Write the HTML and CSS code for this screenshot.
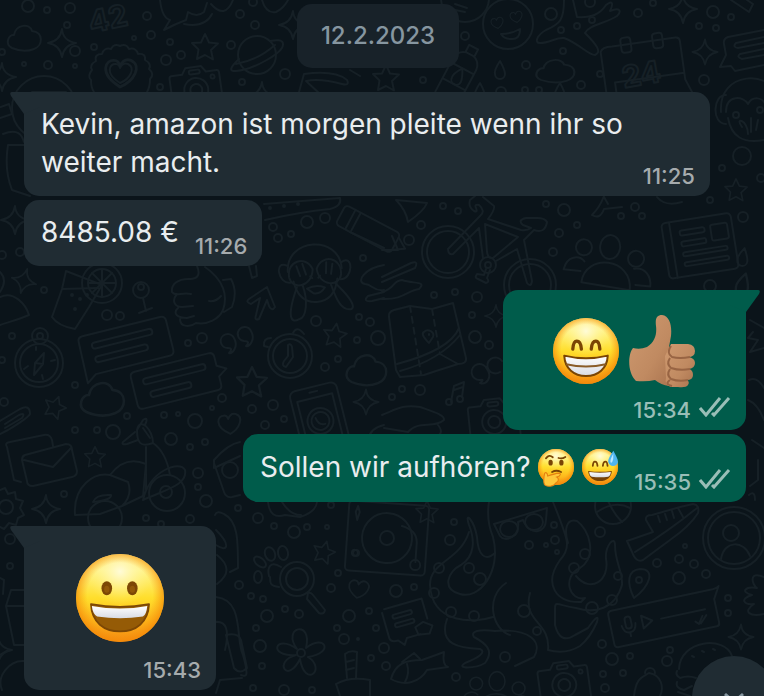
FILE: index.html
```html
<!DOCTYPE html>
<html lang="de">
<head>
  <meta charset="UTF-8">
  <meta name="viewport" content="width=device-width, initial-scale=1.0">
  <title>Chat</title>
  <link rel="stylesheet" href="styles.css">
</head>
<body>
  <!-- doodle wallpaper -->
  <svg class="wallpaper" width="764" height="696" viewBox="0 0 764 696" aria-hidden="true">
    <defs>
      <path id="star" d="M0-13 4-4.5 13-3.5 6 3 8 12.500 0 8-8 12 -6.500 2.500-13-4-4-4.500Z"/>
      <path id="sparkle" d="M0-14Q1-2 14 0 2 2 0 14-2 2-14 0-2-2 0-14Z"/>
      <path id="cloud" d="M-12 10C-20 6-15-4-10-3-8-14 6-15 8-7 20-6 19 8 10 11Q0 15-12 10Z"/>
      <path id="heart" d="M0 10C-16 0-10-10-4-9Q-1-9 0-5 3-11 8-9C16-5 10 6 0 10Z"/>
      <path id="drop" d="M0-9Q-6 0-5 4A5 5 0 0 0 5 4Q5 0 0-9Z"/>
      <g id="note-card"><path d="M-40-20H40Q45-20 45-15V15Q45 20 40 20H-36L-46 27-45-15Q-45-20-40-20Z"/><rect x="-33" y="-11" width="62" height="6" rx="3"/><rect x="-33" y="3" width="54" height="6" rx="3"/></g>
      <g id="camera"><path d="M-23-15H-12L-8-21H8L12-15H23Q25-15 25-12V18Q25 21 22 21H-22Q-25 21-25 18V-12Q-25-15-23-15Z"/><circle cy="2" r="12"/><circle cy="2" r="6"/><rect x="-5" y="-18" width="11" height="4" rx="2"/><circle cx="18" cy="-9" r="2"/></g>
      <g id="people"><circle cx="-26" cy="-8" r="8"/><ellipse cy="-11" rx="10" ry="12"/><circle cx="27" cy="-2" r="8"/><path d="M-25 27C-24-3 24-3 24 30ZM-27 16H-44C-42 2-30 0-24 6M26 8C37 5 44 14 44 24H29"/></g>
      <g id="monkey"><path d="M-27-4C-27-38 27-38 27-4M-27-10C-40-18-38 8-25 7M27-10C40-18 38 8 25 7M-22 6Q-18 28 0 28 18 28 22 6"/><path d="M-9 14Q0 10 9 14 4 21-3 19ZM-5 2-3 4M5 2 3 4"/><path d="M-2-5C-8-20-28-15-26 2-24 14-4 14-2-5ZM2-5C8-20 28-15 26 2 24 14 4 14 2-5ZM-19 12C-32 42-27 48-19 44-11 43-9 25-13 11M20 11C40 33 38 40 29 37 21 34 18 20 15 11M-18-9-15 1M-12-11-9 0M12-11 11 0M18-9 16 1"/></g>
    </defs>

    <!-- bubbles and dots -->
    <circle cx="28" cy="6" r="6"/><circle cx="47" cy="10" r="3"/><circle cx="70" cy="8" r="5"/><circle cx="67" cy="25" r="3"/><circle cx="147" cy="16" r="4"/><circle cx="151" cy="35" r="4"/><circle cx="134" cy="38" r="2"/><circle cx="170" cy="42" r="3"/><circle cx="94" cy="47" r="3"/><circle cx="75" cy="51" r="5"/><circle cx="48" cy="65" r="4"/><circle cx="24" cy="64" r="2"/><circle cx="75" cy="66" r="2"/><circle cx="166" cy="60" r="5"/><circle cx="181" cy="55" r="4"/><circle cx="231" cy="45" r="4"/><circle cx="240" cy="14" r="4"/><circle cx="253" cy="2" r="4"/><circle cx="255" cy="25" r="4"/><circle cx="242" cy="82" r="3"/><circle cx="285" cy="74" r="5"/><circle cx="160" cy="87" r="3"/><circle cx="2" cy="52" r="3"/>
    <circle cx="551" cy="14" r="6"/><circle cx="590" cy="2" r="5"/><circle cx="638" cy="13" r="4"/><circle cx="465" cy="36" r="4"/><circle cx="563" cy="51" r="3"/><circle cx="526" cy="65" r="4"/><circle cx="423" cy="80" r="3"/><circle cx="600" cy="74" r="3"/><circle cx="581" cy="85" r="4"/><circle cx="699" cy="26" r="3"/><circle cx="716" cy="28" r="3"/><circle cx="713" cy="12" r="6"/><circle cx="731" cy="17" r="3"/><circle cx="704" cy="80" r="5"/><circle cx="577" cy="26" r="3"/><circle cx="592" cy="20" r="3"/><circle cx="561" cy="30" r="3"/><circle cx="653" cy="3" r="3"/><circle cx="525" cy="90" r="3"/><circle cx="539" cy="90" r="3"/><circle cx="501" cy="92" r="5"/>
    <circle cx="722" cy="168" r="3"/><circle cx="710" cy="200" r="3"/><circle cx="743" cy="217" r="5"/><circle cx="761" cy="178" r="4"/><circle cx="443" cy="206" r="3"/><circle cx="458" cy="211" r="3"/><circle cx="421" cy="225" r="4"/><circle cx="564" cy="210" r="6"/><circle cx="546" cy="204" r="3"/><circle cx="621" cy="216" r="3"/><circle cx="635" cy="207" r="4"/><circle cx="642" cy="216" r="3"/><circle cx="577" cy="225" r="3"/><circle cx="559" cy="233" r="4"/><circle cx="307" cy="222" r="6"/><circle cx="325" cy="218" r="5"/><circle cx="273" cy="227" r="4"/><circle cx="278" cy="238" r="4"/><circle cx="291" cy="234" r="3"/>
    <circle cx="44" cy="290" r="3"/><circle cx="20" cy="252" r="4"/><circle cx="2" cy="255" r="4"/><circle cx="107" cy="315" r="5"/><circle cx="120" cy="316" r="4"/><circle cx="188" cy="343" r="3"/><circle cx="202" cy="338" r="5"/><circle cx="12" cy="336" r="3"/><circle cx="2" cy="360" r="3"/><circle cx="75" cy="385" r="3"/><circle cx="4" cy="402" r="4"/><circle cx="75" cy="430" r="3"/><circle cx="97" cy="430" r="3"/><circle cx="113" cy="432" r="7"/><circle cx="127" cy="416" r="3"/><circle cx="164" cy="415" r="3"/><circle cx="178" cy="414" r="2"/><circle cx="195" cy="421" r="7"/><circle cx="171" cy="439" r="6"/><circle cx="190" cy="447" r="3"/><circle cx="205" cy="442" r="3"/><circle cx="222" cy="398" r="4"/><circle cx="212" cy="408" r="2"/><circle cx="252" cy="409" r="4"/><circle cx="273" cy="405" r="5"/><circle cx="284" cy="419" r="3"/><circle cx="265" cy="425" r="4"/><circle cx="325" cy="367" r="4"/><circle cx="338" cy="359" r="3"/><circle cx="316" cy="321" r="5"/><circle cx="359" cy="317" r="3"/><circle cx="370" cy="322" r="4"/><circle cx="357" cy="340" r="3"/><circle cx="378" cy="338" r="7"/><circle cx="363" cy="258" r="3"/>
    <circle cx="409" cy="240" r="5"/><circle cx="434" cy="295" r="3"/><circle cx="455" cy="292" r="3"/><circle cx="477" cy="297" r="5"/><circle cx="472" cy="315" r="3"/><circle cx="475" cy="337" r="6"/><circle cx="489" cy="345" r="4"/><circle cx="402" cy="389" r="3"/><circle cx="420" cy="390" r="5"/><circle cx="392" cy="397" r="3"/><circle cx="553" cy="252" r="4"/><circle cx="710" cy="286" r="6"/>
    <circle cx="64" cy="494" r="3"/><circle cx="198" cy="473" r="5"/><circle cx="198" cy="487" r="3"/><circle cx="206" cy="501" r="6"/><circle cx="146" cy="518" r="3"/><circle cx="190" cy="519" r="4"/><circle cx="161" cy="524" r="3"/><circle cx="238" cy="508" r="3"/><circle cx="258" cy="518" r="5"/><circle cx="274" cy="526" r="3"/><circle cx="294" cy="532" r="6"/><circle cx="307" cy="527" r="3"/><circle cx="327" cy="527" r="2"/><circle cx="331" cy="505" r="3"/><circle cx="239" cy="585" r="4"/><circle cx="251" cy="596" r="3"/><circle cx="263" cy="599" r="3"/><circle cx="285" cy="609" r="3"/><circle cx="299" cy="614" r="4"/><circle cx="267" cy="616" r="6"/><circle cx="256" cy="628" r="3"/><circle cx="260" cy="646" r="6"/><circle cx="262" cy="666" r="3"/><circle cx="338" cy="573" r="3"/><circle cx="331" cy="588" r="4"/><circle cx="349" cy="616" r="6"/><circle cx="369" cy="611" r="3"/><circle cx="337" cy="628" r="3"/><circle cx="344" cy="639" r="5"/><circle cx="358" cy="639" r="1"/><circle cx="376" cy="628" r="3"/><circle cx="371" cy="658" r="3"/><circle cx="253" cy="688" r="3"/><circle cx="284" cy="690" r="5"/><circle cx="10" cy="539" r="5"/><circle cx="10" cy="566" r="3"/><circle cx="356" cy="553" r="3"/><circle cx="312" cy="690" r="3"/>
    <circle cx="454" cy="522" r="3"/><circle cx="450" cy="540" r="5"/><circle cx="600" cy="532" r="5"/><circle cx="529" cy="545" r="4"/><circle cx="546" cy="545" r="2"/><circle cx="555" cy="540" r="4"/><circle cx="554" cy="525" r="3"/><circle cx="557" cy="552" r="2"/><circle cx="657" cy="563" r="4"/><circle cx="679" cy="559" r="4"/><circle cx="694" cy="564" r="4"/><circle cx="685" cy="546" r="2"/><circle cx="706" cy="574" r="4"/><circle cx="679" cy="578" r="6"/><circle cx="396" cy="591" r="6"/><circle cx="414" cy="587" r="3"/><circle cx="728" cy="598" r="3"/><circle cx="728" cy="613" r="3"/><circle cx="384" cy="648" r="5"/><circle cx="505" cy="657" r="5"/><circle cx="386" cy="666" r="4"/><circle cx="456" cy="677" r="4"/><circle cx="602" cy="644" r="4"/><circle cx="612" cy="659" r="6"/><circle cx="630" cy="656" r="3"/><circle cx="670" cy="650" r="3"/><circle cx="667" cy="661" r="5"/><circle cx="603" cy="674" r="3"/><circle cx="623" cy="673" r="3"/><circle cx="605" cy="688" r="4"/>

    <!-- stars, sparkles, clouds, hearts, drops -->
    <use href="#star" x="205" y="47"/>
    <use href="#star" x="386" y="78"/>
    <use href="#star" transform="translate(736 190) scale(.85)"/>
    <use href="#star" transform="translate(335 335) rotate(8) scale(.9)"/>
    <use href="#star" transform="translate(252 382) scale(1.15)"/>
    <use href="#star" transform="translate(55 407) rotate(20) scale(.85)"/>
    <use href="#star" transform="translate(95 457) scale(.8)"/>
    <use href="#star" transform="translate(324 552) rotate(15) scale(.85)"/>
    <use href="#star" transform="translate(427 512) scale(.85)"/>
    <use href="#sparkle" x="62" y="43"/>
    <use href="#sparkle" x="2" y="77"/>
    <use href="#sparkle" x="262" y="96"/>
    <use href="#sparkle" x="293" y="25"/>
    <use href="#sparkle" x="15" y="220"/>
    <use href="#sparkle" x="683" y="9"/>
    <use href="#sparkle" transform="translate(705 52) scale(.9)"/>
    <use href="#sparkle" transform="translate(24 281) rotate(15) scale(.9)"/>
    <use href="#sparkle" transform="translate(366 402) scale(.9)"/>
    <use href="#sparkle" transform="translate(496 316) scale(.8)"/>
    <use href="#sparkle" x="46" y="509"/>
    <use href="#sparkle" transform="translate(741 637) scale(.9)"/>
    <use href="#sparkle" x="-2" y="650"/>
    <use href="#cloud" x="24" y="38"/>
    <use href="#cloud" transform="translate(555 71) scale(1.15 .9)"/>
    <use href="#cloud" transform="translate(102 399) scale(1.300)"/>
    <use href="#cloud" transform="translate(366 370) scale(1.200)"/>
    <use href="#heart" x="120" y="73"/>
    <use href="#heart" transform="translate(120 73) scale(1.400)"/>
    <use href="#heart" transform="translate(229 424) rotate(-8)"/>
    <use href="#heart" transform="translate(358 589) rotate(8) scale(.9)"/>
    <use href="#drop" x="500" y="70"/>
    <use href="#drop" x="480" y="92"/>
    <use href="#drop" x="560" y="92"/>
    <use href="#drop" transform="translate(743 257) rotate(10)"/>
    <use href="#drop" transform="translate(743 284) rotate(15) scale(1.200)"/>

    <!-- top row -->
    <text class="numeral" transform="translate(91 33) rotate(-12)">42</text>
    <path d="M160 0Q162 18 170 20L164 30Q175 24 186 20L188 12Q197 18 204 12L207 3M184 24Q205 28 212 14M211 4Q225 20 233 0M262 0Q266 14 276 12 284 8 288 0"/>
    <path d="M120 46q6-3 9 3 7-2 9 5 8-1 7 6 7 4 4 9 6 5 1 10 0 8-3 13M120 46q-6-3-9 3-7-2-9 5-8 0-6 7-7 4-4 9-5 6-1 10 0 8 3 12"/>
    <circle cx="257" cy="55" r="19"/><path d="M239 59Q225 72 236 71C252 70 284 53 283 44 283 39 275 40 270 41M236 64Q258 60 275 45"/>
    <use href="#camera" transform="translate(196 88) rotate(-8)"/>
    <circle cx="44" cy="108" r="32"/><path d="M32 92H66M-2 108 9 104 12 114 0 118M3 134C18 128 22 135 24 142M8 145H24M8 145Q4 170 12 190L30 196"/>
    <path d="M299 92 304 74Q335 70 347 80 350 86 342 84 320 78 306 81L320 94M350 70 360 76"/>
    <circle cx="465" cy="-2" r="24"/><path d="M455 4 467 8M455 10 465 12"/>
    <circle cx="508" cy="24" r="25"/><use href="#heart" transform="translate(497 23) rotate(-12) scale(.55)"/><use href="#heart" transform="translate(516 17) rotate(-12) scale(.55)"/><path d="M501 34Q511 34 520 29 520 40 511 39 504 39 501 34Z"/>
    <path d="M564 0C564 20 560 24 546 30 537 35 534 43 540 43 550 43 556 37 564 38 580 44 588 55 595 55 602 52 597 45 585 33 589 25 604 24 617 16 622 11 620 7 610 11 614 3 612 0 606 5 600 14 592 18 577 17L573 0"/>
    <g transform="translate(461 71) rotate(28)"><path d="M-13 30V-8Q-12-17-4-19H4Q12-17 13-8V30M-13-3H13M-13 15H13M-5-20V-27H5V-20"/><use href="#drop" x="0" y="6"/></g>
    <g transform="translate(646 73) rotate(-8)"><path d="M-42 22V-27Q-40-32-30-31H34Q38-31 38-27V12L44 28M-32 5H38M-32 5V22"/><rect x="-21" y="-38" width="10" height="15" rx="3"/><rect x="11" y="-38" width="10" height="15" rx="3"/></g>
    <text class="numeral" transform="translate(624 88) rotate(-10)">24</text>
    <path d="M764 30 728 37Q723 39 724 44L726 55 720 67 731 66 735 71 764 65M764 37 736 43Q732 47 738 48L764 43M764 49 740 54Q736 57 742 59L764 55M731 0 749 12 753 4 747 0"/>
    <g transform="translate(748 112)"><path d="M-27 0C-30-42 24-42 30-15M-22-17C-35-18-37 12-22 12M-22 0C-22-18-4-16 0-8 4-16 16-16 18-5M-20 6Q-15 34 16 28M0 22C0 8-14 4-6 15M3 20 3 6M8 18 10 8"/><circle cx="-12" cy="3" r="3"/><circle cx="12" cy="-2" r="3"/><circle cx="-6" cy="44" r="9"/></g>

    <!-- strip between the first messages -->
    <path d="M264 204 340 198Q342 206 330 209 300 212 265 220"/><circle cx="270" cy="208" r="1"/><circle cx="284" cy="206" r="1"/><circle cx="298" cy="204" r="1"/>
    <g transform="translate(368 229) rotate(28)"><rect x="-31" y="-11" width="62" height="22" rx="4"/><path d="M-20-11V11M-14-11V11M31-7 42 0 31 7"/></g>
    <path d="M396 200 427 203Q424 211 408 222 406 210 396 200Z"/>
    <path d="M592 215Q600 207 604 196M592 215Q600 220 604 209L622 207M657 197Q665 207 682 202M604 197 608 204"/>
    <g transform="translate(699 246) rotate(-9)"><rect x="-34" y="-28" width="70" height="56" rx="4"/><path d="M-26-28V28"/><rect x="-17" y="-18" width="25" height="5" rx="2"/><rect x="-17" y="-7" width="25" height="5" rx="2"/><rect x="-17" y="4" width="45" height="4" rx="2"/><rect x="-17" y="14" width="45" height="4" rx="2"/><rect x="14" y="-19" width="17" height="16" rx="2"/></g>

    <!-- middle rows -->
    <path d="M0 272Q8 280 0 292M0 297C14 290 26 305 29 315 18 320 8 322 0 325M350 232 384 248M384 265C365 268 355 282 365 284 372 284 374 292 384 290M384 292 368 296Q362 302 372 301L384 298"/>
    <path d="M66 271 62 289 52 317Q58 326 75 329L89 307 102 285ZM62 289 98 288"/><circle cx="72" cy="295" r="1"/><circle cx="80" cy="299" r="1"/><circle cx="87" cy="295" r="1"/><circle cx="75" cy="309" r="1"/>
    <circle cx="102" cy="283" r="20"/><circle cx="102" cy="283" r="14"/><path d="M88 283H116M102 269V297M92 273 112 293M112 273 92 293"/>
    <circle cx="141" cy="290" r="8"/><circle cx="141" cy="287" r="3"/><path d="M143 298 146 311M139 313 152 308"/>
    <path d="M197 266Q202 278 191 279C177 278 171 285 172 292 175 297 182 292 191 294M177 294C171 301 175 307 182 307L193 306M178 308C172 314 178 318 187 318L194 316M180 319C180 328 191 327 196 323 208 325 219 319 223 310 228 296 224 280 205 267M209 301Q216 302 221 296M223 280 231 279Q238 292 232 307L224 312M249 266 252 278 257 276 256 266"/>
    <path d="M267 287 275 307Q272 312 269 306L267 300 259 319Q254 321 256 315L260 298 251 304Q245 302 249 299Z"/>
    <use href="#monkey" transform="translate(315 274) rotate(-4)"/>
    <circle cx="39" cy="363" r="24"/><circle cx="39" cy="363" r="19"/><circle cx="40" cy="336" r="8"/><circle cx="40" cy="336" r="3"/><path d="M44 353 35 363 34 375 43 364ZM35 363 43 364M24 369 28 366M51 361 55 360M43 379 42 375M36 347 36 350"/>
    <use href="#note-card" transform="translate(126 346) rotate(-14)"/>
    <g transform="translate(176 381) rotate(-14) scale(-1 1)"><path d="M-38-19H38Q43-19 43-14V14Q43 19 38 19H-38Q-43 19-43 14V6L-52 0-43-5V-14Q-43-19-38-19Z"/><rect x="-32" y="-10" width="64" height="6" rx="3"/><rect x="-14" y="4" width="42" height="6" rx="3"/></g>
    <path d="M228 348A7 7 0 1 1 234 338C239 347 232 354 229 353 232 350 232 348 228 348ZM244 341A7 7 0 1 1 251 331C256 340 249 347 246 346 249 343 249 341 244 341Z"/>
    <circle cx="290" cy="356" r="22"/><circle cx="290" cy="356" r="17"/><path d="M288 345Q291 343 292 347L293 357 286 367Q281 366 284 361L288 356ZM271 338Q263 338 264 346L268 347M293 333Q297 325 304 334"/>
    <g transform="translate(320 419) rotate(-14)"><rect x="-24" y="-33" width="48" height="85" rx="6"/><rect x="-18" y="-22" width="36" height="70"/><path d="M-4-28H4"/><circle cy="2" r="13"/><circle cy="2" r="9"/><path d="M-4-2Q-3 6 4 6"/></g>
    <path d="M384 425Q370 428 368 440M0 421 20 409Q30 404 30 414 28 418 8 430L0 434M5 424 19 415Q26 412 22 418L5 428"/>
    <path d="M7 447Q4 443 10 442L44 435Q50 434 52 440L53 446M7 447 14 480 21 482M25 455 66 444Q72 444 72 450L77 471Q77 476 72 477L33 486Q27 486 27 481L22 460Q22 456 25 455ZM24 460 53 467 71 448"/>
    <path d="M137 430C140 416 153 430 153 443 140 448 137 442 137 430ZM137 430 143 420Q149 416 145 425M135 432 123 442Q121 445 127 444L138 440M146 447V490M153 443Q166 452 170 475M150 438 143 428M214 460Q228 444 240 442M214 460V468L240 456"/>
    <!-- bicycle -->
    <circle cx="448" cy="252" r="26"/><circle cx="448" cy="252" r="21"/><circle cx="530" cy="285" r="26"/><circle cx="530" cy="285" r="21"/>
    <path d="M479 228 453 254Q448 255 448 249L480 216Q486 211 479 205 474 204 476 208 478 213 474 211 468 207 470 200L475 196M483 197 494 206Q495 210 488 219L521 230Q527 231 531 228M479 228 483 258M485 224 518 237 493 258Q488 259 487 252ZM496 261 517 249 527 283Q531 288 532 281L524 240 534 230Q545 234 547 222 545 218 537 218H526Q517 220 523 225L531 228"/>
    <circle cx="488" cy="265" r="8"/><circle cx="488" cy="265" r="3"/><path d="M486 269 484 275 477 274Q474 278 478 279L486 283Q490 282 487 278L490 270"/>
    <use href="#people" transform="translate(609 258) rotate(6)"/>
    <path d="M382 277 411 263Q419 260 415 268L382 282M382 292C396 288 392 281 402 280 414 284 427 281 419 289 408 290 404 300 382 299M382 250 398 250 392 236"/>
    <path d="M389 317Q388 312 394 310L410 306 432 309 453 303 466 358Q467 364 458 364L436 371 424 375 400 377 396 370ZM397 364Q450 350 459 328M400 371Q440 360 460 335M440 354 458 364"/>
    <path class="dashed" d="M410 306 421 374M432 309 440 354"/><path d="M429 343Q420 334 424 332C428 328 435 332 433 337ZM429 334V335"/>
    <path d="M480 380A8 8 0 1 1 487 369C493 378 486 385 480 383 484 380 483 379 480 380ZM500 372A8 8 0 1 1 502 361M451 402 454 386 464 382 462 397M454 390 463 387"/><circle cx="449" cy="402" r="3"/><circle cx="460" cy="399" r="3"/>
    <path d="M382 415C395 410 402 404 420 407 434 412 445 415 444 420 434 429 418 420 408 432L384 428M438 425Q446 435 432 438"/>
    <use href="#camera" transform="translate(494 420) rotate(-6)"/>
    <path d="M750 320 764 328M753 332 748 338 758 340 750 352 764 348M749 380Q757 376 764 388M748 400Q758 404 764 420M752 440 764 448M758 460V480L750 486M749 495Q755 490 755 500"/>

    <!-- bottom rows -->
    <path d="M0 490 5 488 8 494 15 492 16 499 23 501 20 508 24 515 18 518 16 525 9 523 4 529 0 527"/><circle cx="6" cy="507" r="7"/>
    <path d="M75 515C73 486 94 472 110 475L128 482Q133 495 122 506L100 514ZM110 475Q125 455 146 464L143 496 122 506M93 502Q96 494 111 495 112 500 93 502ZM143 500C150 470 180 460 185 470 188 485 165 490 143 500"/><circle cx="167" cy="493" r="18"/><circle cx="166" cy="492" r="6"/><circle cx="105" cy="518" r="17"/>
    <path d="M215 515Q217 510 224 514C238 521 238 540 238 568L230 572M216 530C231 545 228 553 216 545M217 555Q236 570 217 584M216 597C245 600 235 640 243 655 250 680 245 676 241 675M226 635Q238 632 241 640L247 668Q240 675 234 668ZM215 622Q232 620 225 650M216 693 220 680 242 678M214 463 224 492Q226 498 232 497L240 495M268 502Q270 520 285 515L300 517Q316 512 317 502M282 502Q290 515 301 515"/><circle cx="230" cy="470" r="8"/>
    <path d="M0 578 4 580 3 594M6 606H25M6 606 11 590H24M6 606 14 645H24M0 655 8 650M24 661C10 660-4 676 2 690"/>
    <circle cx="297" cy="579" r="17"/><circle cx="297" cy="579" r="11"/><path d="M308 593Q311 592 313 595L325 610Q324 615 319 613L307 599ZM281 567C270 560 267 568 269 576 273 578 265 585 279 587"/><ellipse cx="270" cy="554" rx="5" ry="7" transform="rotate(-20 270 554)"/><ellipse cx="283" cy="553" rx="5" ry="7" transform="rotate(-10 283 553)"/><ellipse cx="260" cy="562" rx="4" ry="7" transform="rotate(-50 260 562)"/><ellipse cx="258" cy="577" rx="4" ry="6"/>
    <g transform="translate(301 653)"><path d="M-4-4C-20-26 12-34 5-5M5-5C24-20 34 0 7 4M7 4C26 16 4 36-1 6M-1 6C-14 32-28 8-5 2M-5 2C-34 4-26-20-4-4"/><circle r="4"/></g>
    <path d="M345 654Q350 650 357 652L356 678M345 654 347 678M346 662 354 660M346 670 354 668M336 684Q350 676 370 680V696M336 684 340 696"/>
    <g transform="translate(386 538) rotate(4)"><rect x="-39" y="-35" width="80" height="70" rx="4"/><circle cx="1" r="25"/><circle cx="1" r="7"/><path d="M15-13Q30-10 31 2V22"/><circle cx="31" cy="25" r="5"/><circle cx="-30" cy="17" r="3"/><path d="M-32-24-30-16-28-24-30-30Z"/></g>
    <g transform="translate(408 620) rotate(-16)"><path d="M-20-17H19V4M-23-14V12Q-23 17-15 17L-10 23-6 17H8"/><rect x="-14" y="-9" width="20" height="4" rx="2"/><rect x="-14" y="0" width="20" height="4" rx="2"/><path d="M5 9 14 6 22 12 17 19 6 17Z"/></g>
    <path d="M391 679C395 664 405 660 422 660L436 655 444 652Q442 665 448 667L427 670C420 682 405 687 391 679ZM402 662 414 653 420 659M407 664Q410 673 405 682"/>
    <path d="M494 524 547 508 546 520C546 533 530 537 523 520L518 522C520 537 505 543 500 536Z"/><ellipse cx="509" cy="529" rx="9" ry="8"/><ellipse cx="534" cy="522" rx="9" ry="8"/>
    <!-- octopus -->
    <path d="M489 502Q486 520 493 537C502 572 479 600 460 594 441 589 448 571 461 565 475 556 475 540 469 525 464 510 474 520 477 537 478 555 485 562 495 553M469 532C460 561 430 561 430 585 432 625 475 623 493 617M447 619C438 645 460 648 480 649 487 652 478 658 465 663 455 669 475 669 485 663 495 650 485 643 474 637 470 631 479 629 495 631 530 628 543 642 534 657L515 666M506 583C484 598 493 630 510 635M530 593C522 622 551 622 548 650M553 502C568 540 572 547 560 560 543 584 556 603 581 602L585 598C570 602 561 577 580 568 598 556 589 529 577 521 566 518 564 530 568 543M576 576C591 594 610 580 606 559 605 545 615 535 615 545 615 563 623 571 622 585 615 609 595 614 576 608 560 606 555 600 555 608L555 625Q560 645 575 635L588 628Q600 611 597 622 590 638 580 646 565 655 548 650"/>
    <circle cx="480" cy="579" r="6"/><circle cx="469" cy="568" r="5"/><circle cx="439" cy="568" r="5"/><circle cx="434" cy="593" r="5"/><circle cx="451" cy="612" r="5"/><circle cx="474" cy="616" r="5"/><circle cx="524" cy="611" r="6"/><circle cx="537" cy="631" r="4"/><circle cx="585" cy="554" r="5"/><circle cx="574" cy="568" r="5"/><circle cx="592" cy="608" r="6"/><circle cx="612" cy="600" r="5"/><circle cx="618" cy="576" r="4"/>
    <circle cx="613" cy="506" r="18"/><path d="M597 512Q615 500 630 508M604 490Q610 510 622 522M595 500 632 494"/>
    <path d="M627 541 653 532 646 520Q645 515 652 515L680 507 693 504Q700 505 698 513 690 526 670 540L643 560Q636 563 632 552ZM635 552Q670 530 697 508M683 517 678 508M658 516 660 522M665 514 667 520M672 511 674 518"/>
    <circle cx="734" cy="538" r="31"/><circle cx="734" cy="538" r="26"/><circle cx="731" cy="533" r="8"/><path d="M721 559C724 540 744 540 750 556"/>
    <path d="M634 598C626 582 628 570 640 569 656 569 650 586 634 598Z"/><circle cx="639" cy="580" r="3"/>
    <g transform="translate(664 618) rotate(-12)"><path d="M-50-18H51Q58-18 60-20L53-8V16Q53 19 50 19H-50Q-54 19-54 16V-14Q-54-18-50-18Z"/><rect x="-39" y="-9" width="6" height="12" rx="3"/><path d="M-43-1Q-42 7-36 7-30 7-29-1M-36 7V11M-22-7V6L-12 0ZM-3 0H42M30 10 33 13 38 6M35 13 42 6"/></g>
    <path d="M764 577C748 570 752 585 757 588 745 586 740 592 752 595 739 599 744 605 754 604 742 612 750 617 764 614"/>
    <use href="#camera" transform="translate(564 683) rotate(-8)"/>
    <use href="#people" transform="translate(497 690) scale(.8)"/>
    <path d="M634 696C636 678 642 677 649 673 662 675 664 688 660 696M645 673A5 5 0 1 1 655 673M679 669C680 640 725 635 732 656M677 671Q675 675 680 678 688 675 696 678M677 682Q675 688 684 690L692 686M678 692 690 696"/>
    <path d="M692 656 694 657M702 651 704 652M713 649 715 650"/>
  </svg>

  <!-- shared emoji colours -->
  <svg class="defs" width="0" height="0" aria-hidden="true">
    <defs>
      <linearGradient id="skin" x1="0" y1="0" x2="0" y2="1">
        <stop offset="0" stop-color="#ffe873"/><stop offset=".18" stop-color="#fff48a"/><stop offset=".5" stop-color="#ffde2c"/><stop offset=".78" stop-color="#fdb71b"/><stop offset="1" stop-color="#f28a16"/>
      </linearGradient>
      <radialGradient id="rim" cx=".5" cy=".47" r=".53">
        <stop offset=".7" stop-color="#f99a12" stop-opacity="0"/><stop offset="1" stop-color="#f58a08" stop-opacity=".9"/>
      </radialGradient>
      <radialGradient id="shine" cx=".5" cy=".2" r=".38">
        <stop offset="0" stop-color="#fffce0" stop-opacity=".9"/><stop offset="1" stop-color="#fff58c" stop-opacity="0"/>
      </radialGradient>
      <linearGradient id="teeth" x1="0" y1="0" x2="0" y2="1">
        <stop offset="0" stop-color="#fff"/><stop offset="1" stop-color="#d9dce4"/>
      </linearGradient>
      <linearGradient id="hand" x1="0" y1="0" x2="1" y2="1">
        <stop offset="0" stop-color="#cf9a70"/><stop offset=".6" stop-color="#c08a61"/><stop offset="1" stop-color="#a8724e"/>
      </linearGradient>
      <g id="face"><circle cx="50" cy="50" r="50" fill="url(#skin)"/><circle cx="50" cy="50" r="50" fill="url(#shine)"/><circle cx="50" cy="50" r="50" fill="url(#rim)"/></g>
      <g id="smiling-eyes" fill="none" stroke="#7a4504" stroke-width="5" stroke-linecap="round"><path d="M30 47Q31 35 36 35 42 35 43 47M58 47Q59 35 65 35 70 35 71 47"/></g>
      <g id="ticks" fill="none" stroke="currentColor" stroke-width="3"><path d="M1 11 7 18 21 1M13 16 15 18 30 1"/></g>
    </defs>
  </svg>

  <main class="chat">
    <time class="date" datetime="2023-02-12">12.2.2023</time>

    <article class="message in tail">
      <p class="text">Kevin, amazon ist morgen pleite wenn ihr so weiter macht.</p>
      <div class="meta"><time>11:25</time></div>
    </article>

    <article class="message in">
      <p class="text">8485.08 €</p>
      <div class="meta"><time>11:26</time></div>
    </article>

    <article class="message out tail emoji-only">
      <div class="emojis">
        <svg class="emoji-large" viewBox="0 0 100 100" role="img" aria-label="Strahlendes Gesicht">
          <use href="#face"/><use href="#smiling-eyes"/>
          <path d="M17 57Q50 65 83 57C82 77 68 88 50 88S18 77 17 57Z" fill="url(#teeth)" stroke="#7a4504" stroke-width="3" stroke-linejoin="round"/>
          <path d="M20 70Q50 77 80 70" fill="none" stroke="#8a5c28" stroke-width="3"/>
        </svg>
        <svg class="thumb" viewBox="0 0 68 74" role="img" aria-label="Daumen hoch">
          <path d="M5 34Q12 36 19 33C27 28 29 20 28 12 27 4 29 1 34 1 42 2 44 12 43 22L41 33 46 60 41 72Q33 71 27 66 19 68 8 67C-1 58 0 40 5 34Z" fill="url(#hand)"/>
          <path d="M43 30H60Q67 31 67 37T60 43Q67 44 67 49T61 55Q65 56 65 61T59 66Q62 68 60 71 58 74 50 73H43Q36 71 38 64L37 42Z" fill="url(#hand)"/>
          <path d="M62 43Q52 45 44 43 38 39 43 32M62 55Q52 57 43 54 38 50 42 44M60 66Q51 68 43 65 38 61 42 55M44 72Q36 70 42 66" fill="none" stroke="#986443" stroke-width="2"/>
        </svg>
      </div>
      <div class="meta"><time>15:34</time><svg class="ticks" viewBox="0 0 32 20" role="img" aria-label="Zugestellt"><use href="#ticks"/></svg></div>
    </article>

    <article class="message out">
      <p class="text with-emoji">Sollen wir aufhören?
        <svg class="emoji" viewBox="0 0 100 100" role="img" aria-label="Nachdenkliches Gesicht">
          <use href="#face"/>
          <ellipse cx="35" cy="38" rx="6" ry="8" fill="#7a4504"/><ellipse cx="65" cy="38" rx="6" ry="8" fill="#7a4504"/>
          <path d="M22 26Q31 14 41 23M57 25Q67 28 76 22M39 64Q51 57 64 64" fill="none" stroke="#7a4504" stroke-width="5" stroke-linecap="round"/>
          <path d="M18 69C20 63 26 65 27 75 36 72 49 68 57 67 65 67 64 75 52 78 59 82 58 90 50 94 45 104 26 107 18 99 14 89 16 81 18 69Z" fill="#ffc83a" stroke="#e58110" stroke-width="3"/>
        </svg>
        <svg class="emoji" viewBox="0 0 100 100" role="img" aria-label="Gesicht mit Schweißtropfen">
          <use href="#face"/><use href="#smiling-eyes"/>
          <path d="M17 61Q50 66 83 61C82 79 68 89 50 89S18 79 17 61Z" fill="#754207"/>
          <path d="M20 64Q50 68 80 64 79 75 73 77 50 80 27 77 21 75 20 64Z" fill="url(#teeth)"/>
          <path d="M87 5C76 22 72 29 73 37 76 51 98 50 100 36 100 28 94 18 87 5Z" fill="#4eb5ef"/><path d="M87 13Q78 28 79 36 81 40 84 36 88 28 87 13Z" fill="#b9e7ff"/>
        </svg>
      </p>
      <div class="meta"><time>15:35</time><svg class="ticks" viewBox="0 0 32 20" role="img" aria-label="Zugestellt"><use href="#ticks"/></svg></div>
    </article>

    <article class="message in tail emoji-only single">
      <div class="emojis">
        <svg class="emoji-huge" viewBox="0 0 100 100" role="img" aria-label="Grinsendes Gesicht">
          <use href="#face"/>
          <ellipse cx="35" cy="39" rx="6" ry="8" fill="#7c4705"/><ellipse cx="64" cy="39" rx="6" ry="8" fill="#7c4705"/>
          <ellipse cx="35" cy="40" rx="3" ry="4" fill="#915809"/><ellipse cx="64" cy="40" rx="3" ry="4" fill="#915809"/>
          <path d="M17 57Q50 63 83 57C82 78 68 88 50 88S18 78 17 57Z" fill="#955b06" stroke="#7c4705" stroke-width="2" stroke-linejoin="round"/>
          <path d="M18 59Q50 65 81 59 80 69 76 71 50 75 24 71 19 68 18 59Z" fill="url(#teeth)"/>
        </svg>
      </div>
      <div class="meta"><time>15:43</time></div>
    </article>
  </main>

  <button class="scroll-down" type="button" aria-label="Nach unten">
    <svg width="22" height="12" viewBox="0 0 22 12"><path d="M2 2 11 10 20 2" fill="none" stroke="currentColor" stroke-width="3"/></svg>
  </button>
</body>
</html>
```
FILE: styles.css
```css
body {
  margin: 0;
  min-height: 100vh;
  position: relative;
  overflow: hidden;
  background-color: #0b141a;
  color: #e9edef;
  font-family: Inter, "Liberation Sans", sans-serif;
  font-size: 28px;
}

.wallpaper {
  position: absolute;
  top: 0;
  left: 0;
  fill: none;
  stroke: #162026;
  stroke-width: 2;
  stroke-linecap: round;
  stroke-linejoin: round;
}

.wallpaper .dashed {
  stroke-dasharray: 6 5;
}

.numeral {
  font-family: Inter, "Liberation Sans", sans-serif;
  font-size: 30px;
  font-weight: 700;
}

.defs {
  position: absolute;
}

.chat {
  position: relative;
  display: flex;
  flex-direction: column;
  align-items: flex-start;
  gap: 4px;
  padding: 4px 18px 6px 24px;
}

.date {
  align-self: center;
  margin-right: 14px;
  padding: 16px 24px;
  border-radius: 15px;
  background-color: #182229;
  color: #8696a0;
  font-size: 24px;
  font-weight: 500;
  line-height: 32px;
}

.message {
  position: relative;
  display: flex;
  align-items: flex-end;
  gap: 16px;
  box-sizing: border-box;
  max-width: 95%;
  padding: 13px 15px 5px 17px;
  border-radius: 15px;
}

.in {
  background-color: #202c33;
}

.out {
  align-self: flex-end;
  background-color: #005c4b;
}

.tail {
  margin-top: 20px;
}

/* corner that points to the sender */
.tail::before {
  content: "";
  position: absolute;
  top: 0;
  width: 30px;
  height: 22px;
  background-color: inherit;
}

.in.tail::before {
  left: -14px;
  clip-path: path("M2 0H30V15L14 22L1 4Q-1 0 2 0Z");
}

.out.tail::before {
  right: -14px;
  clip-path: path("M28 0H0V15L16 22L29 4Q31 0 28 0Z");
}

.text {
  flex: 1;
  margin: 0;
  padding-bottom: 10px;
  line-height: 38px;
}

.with-emoji {
  line-height: 40px;
}

.meta {
  display: flex;
  align-items: center;
  gap: 8px;
  color: #a6abad;
  font-size: 22px;
  font-weight: 500;
  line-height: 30px;
}

.out .meta {
  color: #99beb7;
}

.ticks {
  width: 32px;
  height: 20px;
  margin-bottom: 6px;
}

.emoji {
  width: 36px;
  height: 36px;
  vertical-align: -8px;
  overflow: visible;
}

.emoji-only {
  flex-direction: column;
  gap: 0;
  padding: 24px 15px 5px;
}

.emojis {
  display: flex;
  align-items: center;
  gap: 9px;
  padding: 0 35px 7px;
}

.single {
  padding-top: 28px;
}

.single .emojis {
  padding: 0 37px 13px;
}

.emoji-large {
  width: 66px;
  height: 66px;
}

.emoji-huge {
  width: 88px;
  height: 88px;
}

.thumb {
  width: 68px;
  height: 74px;
}

.scroll-down {
  position: absolute;
  right: -12px;
  bottom: -44px;
  display: flex;
  align-items: center;
  justify-content: center;
  width: 84px;
  height: 84px;
  padding: 0;
  border: 0;
  border-radius: 50%;
  background-color: #202c33;
  color: #8696a0;
}
```
